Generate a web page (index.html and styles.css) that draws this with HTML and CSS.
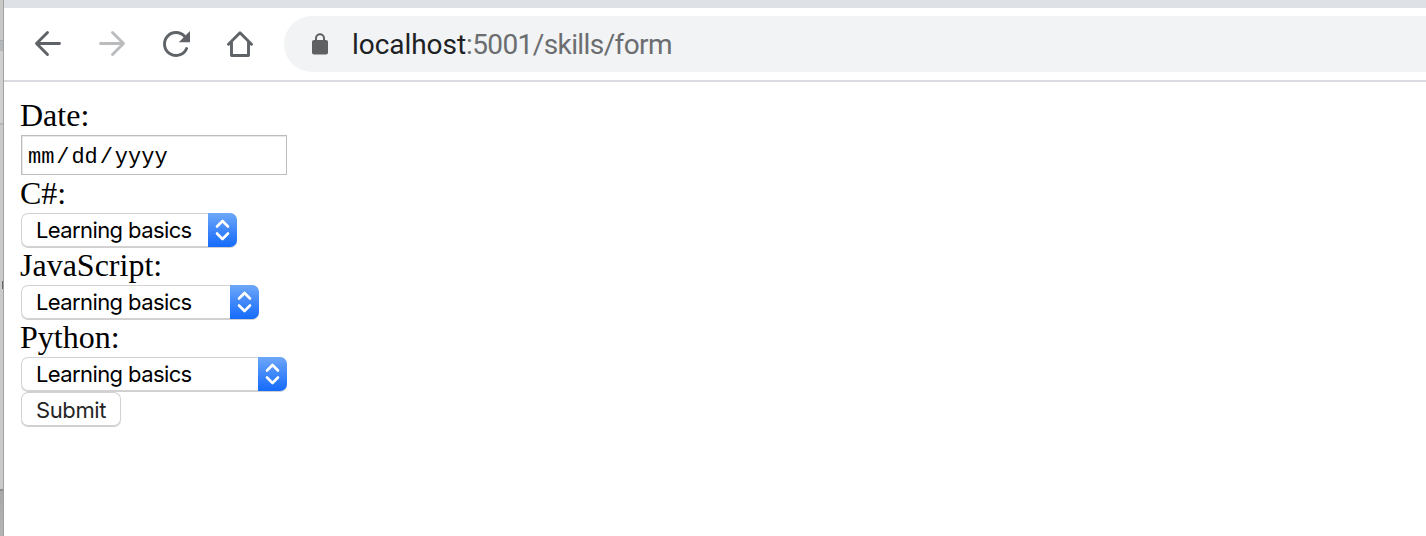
FILE: index.html
```
<!DOCTYPE html>
<html lang="en">
<head>
<meta charset="utf-8">
<title>Skills form</title>
<link rel="stylesheet" href="styles.css">
</head>
<body>
<div class="desktop">
  <aside class="backdrop"><i class="bd-top"></i><i class="bd-bar"></i><i class="bd-mid"></i><i class="bd-body"><b class="bd-dot"></b></i><i class="bd-end"></i></aside>
  <div class="window">
    <div class="tabstrip"></div>
    <header class="toolbar">
      <nav class="nav">
        <svg class="icon" viewBox="0 0 32 32"><path d="M27.500 15.500H5M15.500 4.500L4.500 15.500l11 11"/></svg>
        <svg class="icon icon-off" viewBox="0 0 32 32"><path d="M4.500 15.500H27M16.500 4.500l11 11-11 11"/></svg>
        <svg class="icon" viewBox="0 0 32 32"><path d="M24.800 8.600A11.500 11.500 0 1 0 26.600 20.500"/><path class="solid" d="M30 3v11.200H18.800z"/></svg>
        <svg class="icon" viewBox="0 0 32 32"><path d="M4.500 16.300L16 4.800l11.500 11.500M7.500 14.500v13h17v-13"/></svg>
      </nav>
      <div class="omnibox">
        <svg class="lock" viewBox="0 0 16 22"><path class="shackle" d="M4 8V5.200a4 4 0 0 1 8 0V8"/><rect x="0" y="7" width="16" height="14.500" rx="2"/></svg>
        <span class="url"><span class="host">localhost</span>:5001/skills/form</span>
      </div>
    </header>
    <form class="form">
      <label class="label">Date:</label>
      <div class="date"><span>mm</span><span class="sep">/</span><span>dd</span><span class="sep">/</span><span>yyyy</span></div>
      <label class="label">C#:</label>
      <div class="select select-csharp"><span class="value">Learning basics</span><span class="stepper"><svg viewBox="0 0 29 34"><path d="M9 13.500l5.500-5.500 5.500 5.500M9 20.500l5.500 5.500 5.500-5.500"/></svg></span></div>
      <label class="label">JavaScript:</label>
      <div class="select select-js"><span class="value">Learning basics</span><span class="stepper"><svg viewBox="0 0 29 34"><path d="M9 13.500l5.500-5.500 5.500 5.500M9 20.500l5.500 5.500 5.500-5.500"/></svg></span></div>
      <label class="label">Python:</label>
      <div class="select select-python"><span class="value">Learning basics</span><span class="stepper"><svg viewBox="0 0 29 34"><path d="M9 13.500l5.500-5.500 5.500 5.500M9 20.500l5.500 5.500 5.500-5.500"/></svg></span></div>
      <button class="submit" type="button">Submit</button>
    </form>
  </div>
</div>
</body>
</html>
```
FILE: styles.css
```
* { box-sizing: border-box; }
body { margin: 0; background: #fff; overflow: hidden; }
.desktop { display: flex; height: 536px; }
.backdrop { width: 4px; flex: none; display: flex; flex-direction: column; border-right: 1px solid #a1a1a1; background: #cacaca; }
.bd-top { height: 41px; border-bottom: 1px solid #aaa; background: #c8c8c6; }
.bd-bar { height: 10px; background: #b4b7bb; }
.bd-mid { height: 74px; background: #d0d0d0; border-bottom: 2px solid #b5b5b5; }
.bd-body { height: 366px; display: flex; justify-content: flex-end; padding-top: 156px; border-bottom: 2px solid #8d8d8d; }
.bd-dot { width: 1px; height: 8px; background: #666; }
.bd-end { flex: 1; background: linear-gradient(#a8a8a8, #b5b5b5); }
.window { flex: 1; min-width: 0; }
.tabstrip { height: 8px; background: #dee1e6; }
.toolbar { height: 74px; display: flex; align-items: center; border-bottom: 2px solid #dadbe0; padding-left: 28px; }
.nav { display: flex; gap: 32px; }
.icon { width: 32px; height: 32px; display: block; fill: none; stroke: #5f6368; stroke-width: 2.9; stroke-linejoin: round; stroke-linecap: round; }
.icon-off { stroke: #babcbe; }
.icon .solid { fill: #5f6368; stroke: none; }
.omnibox { height: 56px; flex: 1; margin-left: 28px; padding-left: 28px; display: flex; align-items: center; background: #f1f3f4; border-radius: 28px 0 0 28px; }
.lock { width: 16px; height: 22px; fill: #5f6062; overflow: visible; }
.lock .shackle { fill: none; stroke: #5f6062; stroke-width: 2; }
.url { margin-left: 24px; padding-top: 2px; font: 28px/34px Roboto, sans-serif; letter-spacing: -0.6px; color: #6b6d70; white-space: nowrap; }
.host { color: #202124; letter-spacing: -0.05px; }
.form { padding: 15px 0 0 16px; display: flex; flex-direction: column; align-items: flex-start; }
.label { height: 38px; font: 32px/36px "Liberation Serif", serif; color: #000; }
.date { width: 266px; height: 40px; margin-left: 1px; padding: 6px 0 0 6px; display: flex; align-items: center; border: 1px solid #bcbcbc; box-shadow: inset 1px 1px 0 #e9e9e9; font: 22px/26px "Liberation Mono", monospace; color: #000; }
.sep { width: 17px; text-align: center; }
.select { height: 34px; margin-left: 1px; display: flex; justify-content: space-between; border-radius: 7px; overflow: hidden; background: #fff; box-shadow: inset 0 0 0 1px #d2d2d2, 0 1px 0 #d0d0d0; }
.select-csharp { width: 216px; }
.select-js { width: 238px; }
.select-python { width: 266px; }
.value { padding-left: 15px; font: 22px/34px Inter, sans-serif; color: #000; white-space: nowrap; letter-spacing: -0.6px; }
.stepper { width: 29px; height: 34px; flex: none; background: linear-gradient(#6da8f8, #4087fa 50%, #156bfb); }
.stepper svg { width: 29px; height: 34px; display: block; fill: none; stroke: #fff; stroke-width: 2.6; stroke-linecap: round; stroke-linejoin: round; }
.submit { width: 100px; height: 34px; margin: 1px 0 0 1px; padding: 3px 0 0; border: 0; box-shadow: inset 0 0 0 1px #d2d2d2, 0 1px 0 #d0d0d0; border-radius: 7px; background: #fff; font: 22px/31px Inter, sans-serif; letter-spacing: -0.4px; color: #252525; }
```
